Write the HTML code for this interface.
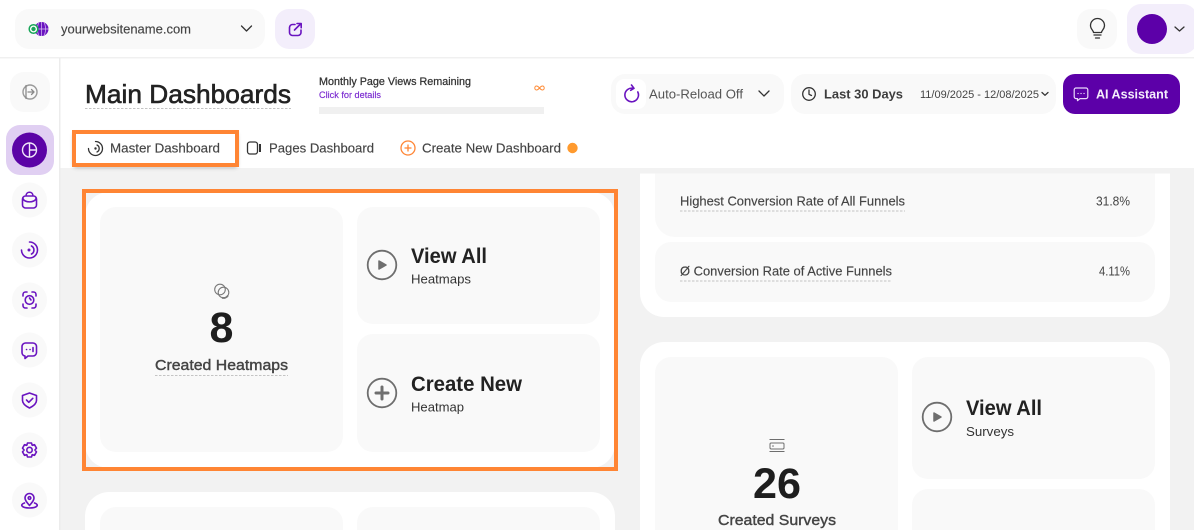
<!DOCTYPE html>
<html><head><meta charset="utf-8"><title>Main Dashboards</title>
<style>
html,body{margin:0;padding:0;width:1194px;height:530px;overflow:hidden;background:#fff}
svg{display:block;font-family:"Liberation Sans",sans-serif}
.m{stroke:currentColor;stroke-width:.4px}
.n{stroke:currentColor;stroke-width:.15px}
.p{fill:none;stroke:#6a14c0;stroke-width:1.6;stroke-linecap:round;stroke-linejoin:round}
.g{fill:none;stroke:#6e6e6e;stroke-width:1.8;stroke-linecap:round;stroke-linejoin:round}
.d{fill:none;stroke:#333;stroke-width:1.3;stroke-linecap:round;stroke-linejoin:round}
.c{fill:#f9f9f9}
.u{stroke:#c4c4c4;stroke-width:1;stroke-dasharray:2.5 1.5}
</style></head><body>
<svg width="1194" height="530" viewBox="0 0 1194 530" xmlns="http://www.w3.org/2000/svg">
<defs><filter id="s" x="-10%" y="-20%" width="120%" height="150%"><feDropShadow dx="0" dy="2" stdDeviation="2" flood-color="#000" flood-opacity=".4"/></filter></defs>
<rect width="1194" height="530" fill="#fff"/>
<!-- content bg -->
<rect x="60" y="168" width="1134" height="362" fill="#f2f2f2"/>
<rect x="0" y="57" width="1194" height="1.5" fill="#f0f0f0"/>
<rect x="59" y="58" width="1.5" height="472" fill="#ececec"/>

<!-- top bar -->
<rect x="15" y="9" width="250" height="40" rx="14" class="c"/>
<circle cx="41.500" cy="29" r="7" fill="#6a14c0"/>
<path d="M34.500 29H48.500M41.500 22V36M38.500 23Q36.500 29 38.500 35M44.500 23Q46.500 29 44.500 35" stroke="#d9c3f2" stroke-width=".7" fill="none"/>
<circle cx="33.500" cy="29" r="4.300" fill="#fff" stroke="#18a558" stroke-width="1.500"/>
<circle cx="33.500" cy="29" r="2.200" fill="#18a558"/>
<text x="61" y="33.500" font-size="13" textLength="130" lengthAdjust="spacingAndGlyphs" style="fill:#444;color:#444" class="n">yourwebsitename.com</text>
<path d="M241.500 26l5 5 5-5" class="d" stroke-width="1.500"/>
<rect x="275" y="9" width="40" height="40" rx="14" fill="#f3eefb"/>
<path d="M295 24.500h-2.500a3 3 0 0 0-3 3v5a3 3 0 0 0 3 3h5.500a3 3 0 0 0 3-3v-2.500M294.500 30l6.500-6.500M297 23.500h4.200v4.200" class="p"/>
<rect x="1077" y="9" width="40" height="40" rx="14" class="c"/>
<path d="M1093.500 32.500c0-2-3-3.200-3-7a7 7 0 0 1 14 0c0 3.800-3 5-3 7zM1094 35h7M1095.500 38h4" class="d" stroke="#444"/>
<rect x="1127" y="4" width="70" height="50" rx="14" fill="#f3eefb"/>
<circle cx="1152" cy="29" r="15" fill="#5c00a8"/>
<path d="M1175 27l4.500 4 4.500-4" class="d"/>

<!-- sidebar -->
<rect x="10" y="72" width="40" height="40" rx="14" class="c"/>
<circle cx="30" cy="92" r="7" fill="none" stroke="#9a9a9a" stroke-width="1.400"/>
<path d="M26 85.500v13M28 92h6M31.500 89.500L34 92l-2.500 2.500" fill="none" stroke="#8a8a8a" stroke-width="1.300" stroke-linecap="round" stroke-linejoin="round"/>
<rect x="6" y="125" width="48" height="50" rx="14" fill="#e0cff2"/>
<circle cx="29.500" cy="150" r="17.500" fill="#5b03a6"/>
<circle cx="29.500" cy="150" r="7" fill="none" stroke="#f0e6fa" stroke-width="1.400"/>
<path d="M29.500 143v14M29.500 150h7" stroke="#f0e6fa" stroke-width="1.400"/>
<g fill="#f9f9f9"><circle cx="29.500" cy="200" r="17.500"/><circle cx="29.500" cy="250" r="17.500"/><circle cx="29.500" cy="300" r="17.500"/><circle cx="29.500" cy="350" r="17.500"/><circle cx="29.500" cy="400" r="17.500"/><circle cx="29.500" cy="450" r="17.500"/><circle cx="29.500" cy="500" r="17.500"/></g>
<path d="M25.500 196h8a3 3 0 0 1 3 3v6a3 3 0 0 1-3 3h-8a3 3 0 0 1-3-3v-6a3 3 0 0 1 3-3zM26 196c0-5 7-5 7 0M23 198.500c1 4.500 12 4.500 13 0" class="p"/>
<path d="M29.500 242a8 8 0 1 1-8 8" class="p" stroke-width="1.700"/>
<path d="M31.500 246a4.500 4.500 0 0 1 0 8" class="p" stroke-width="1.600"/>
<circle cx="29" cy="250" r="1.500" fill="#6a14c0"/>
<path d="M23 296v-1.500a2.500 2.500 0 0 1 2.500-2.500H27M32 292h1.500a2.500 2.500 0 0 1 2.500 2.500V296M36 304v1.500a2.500 2.500 0 0 1-2.500 2.500H32M27 308h-1.500a2.500 2.500 0 0 1-2.500-2.500V304" class="p"/>
<circle cx="29.500" cy="300" r="4.300" class="p"/><path d="M29.500 298l1.500 2" class="p"/>
<path d="M26 343h7a3.500 3.500 0 0 1 3.500 3.500v6a3.500 3.500 0 0 1-3.500 3.500h-5l-3 2.500v-2.500a3.500 3.500 0 0 1-3-3.500v-6a3.500 3.500 0 0 1 3.500-3.500z" class="p"/>
<path d="M26.500 349.500h.1M30 349.500h.1M33 347.500v4" class="p"/>
<path d="M29.500 393l7 2.500v5c0 3-3 5.500-7 7.500c-4-2-7-4.500-7-7.500v-5z" class="p"/><path d="M26.500 400l2.300 2.300l4-4" class="p"/>
<path d="M27.500 443h4l.7 2.300l2.300-.6l2 3.400l-1.600 1.900l1.600 1.900l-2 3.400l-2.300-.6l-.7 2.300h-4l-.7-2.300l-2.300.6l-2-3.400l1.600-1.900l-1.600-1.900l2-3.400l2.300.6z" class="p"/>
<circle cx="29.500" cy="450" r="2.700" class="p"/>
<path d="M29.500 505.500c-2.500-3-4.500-5-4.500-7.500a4.500 4.500 0 0 1 9 0c0 2.500-2 4.500-4.500 7.500z" class="p"/>
<circle cx="29.500" cy="498" r="1.300" class="p"/>
<path d="M24.500 503c-5 1.500-3 5 5 5s10-3.500 5-5" class="p"/>

<!-- header -->
<text x="85" y="103" font-size="26" textLength="206" lengthAdjust="spacingAndGlyphs" style="fill:#222;color:#222;stroke-width:.6px" class="m">Main Dashboards</text>
<line x1="85" y1="108.500" x2="291" y2="108.500" class="u"/>
<text x="319" y="85" font-size="11" textLength="152" lengthAdjust="spacingAndGlyphs" style="fill:#333;color:#333;stroke-width:.25px" class="m">Monthly Page Views Remaining</text>
<text x="319" y="98" font-size="9" textLength="62" lengthAdjust="spacingAndGlyphs" style="fill:#7a2ad0;color:#7a2ad0" class="n">Click for details</text>
<rect x="319" y="107" width="225" height="7" fill="#f0f0f0"/>
<path d="M539.500 88c-1.400-1.700-2.300-2-3.100-2s-1.600.8-1.600 2 .8 2 1.600 2 1.700-.3 3.100-2 2.300-2 3.100-2 1.600.8 1.600 2-.8 2-1.600 2-1.700-.3-3.100-2z" fill="none" stroke="#ff8a34" stroke-width="1"/>
<rect x="611" y="74" width="173" height="40" rx="14" class="c"/>
<rect x="616" y="79" width="30" height="30" rx="8" fill="#fff"/>
<path d="M637.800 92a6.800 6.800 0 1 1-4.300-3.600M631.500 85l2.500 3.300l-3.300 2" class="p"/>
<text x="649" y="98.500" font-size="13" textLength="94" lengthAdjust="spacingAndGlyphs" style="fill:#555">Auto-Reload Off</text>
<path d="M759 91l5 5 5-5" class="d" stroke-width="1.500"/>
<rect x="791" y="74" width="265" height="40" rx="14" class="c"/>
<circle cx="809" cy="94" r="6.300" class="d"/><path d="M809 90v4.300l2.500 1.200" class="d"/>
<text x="824" y="98.500" font-size="13" font-weight="700" textLength="79" lengthAdjust="spacingAndGlyphs" style="fill:#3d3d3d">Last 30 Days</text>
<text x="920" y="98" font-size="11" textLength="119" lengthAdjust="spacingAndGlyphs" style="fill:#444">11/09/2025 - 12/08/2025</text>
<path d="M1042 92.500l3 2.800 3-2.800" class="d" stroke-width="1"/>
<rect x="1063" y="74" width="117" height="40" rx="12" fill="#5c00a8"/>
<path d="M1076 88h10a1.800 1.800 0 0 1 1.800 1.800v7a1.800 1.800 0 0 1-1.800 1.800h-6l-2.500 2v-2h-1.500a1.800 1.800 0 0 1-1.800-1.800v-7a1.800 1.800 0 0 1 1.800-1.800z" fill="none" stroke="#e9d9fa" stroke-width="1.200" stroke-linejoin="round"/>
<path d="M1078 93.500h.1M1081 93.500h.1M1084 93.500h.1" stroke="#e9d9fa" stroke-width="1.300" stroke-linecap="round"/>
<text x="1096" y="98.500" font-size="13" font-weight="700" textLength="72" lengthAdjust="spacingAndGlyphs" style="fill:#f5eefc">AI Assistant</text>

<!-- tabs -->
<rect x="74" y="132" width="163" height="33" fill="#fff" filter="url(#s)"/>
<rect x="74" y="132" width="163" height="33" fill="#fff" stroke="#ff8534" stroke-width="4"/>
<path d="M95.500 141.500a7 7 0 1 1-7 7" fill="none" stroke="#333" stroke-width="1.300" stroke-linecap="round"/>
<path d="M97 145a3.900 3.900 0 0 1 0 7" fill="none" stroke="#333" stroke-width="1.300" stroke-linecap="round"/>
<circle cx="95.500" cy="148.500" r="1.200" fill="#333"/>
<text x="110" y="152.500" font-size="13" textLength="110" lengthAdjust="spacingAndGlyphs" style="fill:#444;color:#444" class="n">Master Dashboard</text>
<rect x="247.500" y="142" width="10" height="12" rx="2.500" class="d"/><path d="M260 144v8" stroke="#333" stroke-width="2"/>
<text x="269" y="152.500" font-size="13" textLength="105" lengthAdjust="spacingAndGlyphs" style="fill:#444;color:#444" class="n">Pages Dashboard</text>
<circle cx="408" cy="148" r="7" fill="none" stroke="#ff8534" stroke-width="1.300"/>
<path d="M404.500 148h7M408 144.500v7" stroke="#ff8534" stroke-width="1.300"/>
<text x="422" y="152.500" font-size="13" textLength="139" lengthAdjust="spacingAndGlyphs" style="fill:#444;color:#444" class="n">Create New Dashboard</text>
<circle cx="572.500" cy="148" r="5.200" fill="#ff9a2e"/>

<!-- heatmap card -->
<rect x="85" y="192" width="530" height="276" rx="24" fill="#fff"/>
<rect x="84" y="191" width="532" height="278" fill="none" stroke="#ff8534" stroke-width="4"/>
<rect x="100" y="207" width="243" height="245" rx="16" class="c"/>
<rect x="357" y="207" width="243" height="117" rx="16" class="c"/>
<rect x="357" y="334" width="243" height="118" rx="16" class="c"/>
<circle cx="220" cy="289.500" r="5.300" fill="none" stroke="#7a7a7a" stroke-width="1.100"/>
<circle cx="223.500" cy="292.500" r="5.300" fill="none" stroke="#7a7a7a" stroke-width="1.100"/>
<path d="M228 295.500a5.300 5.300 0 0 1-6 2.300" fill="none" stroke="#7a7a7a" stroke-width="1.800"/>
<text x="221.500" y="342" font-size="43" font-weight="700" text-anchor="middle" style="fill:#1e1e1e">8</text>
<text x="155" y="370" font-size="15" textLength="133" lengthAdjust="spacingAndGlyphs" style="fill:#444;color:#444" class="m">Created Heatmaps</text>
<line x1="155" y1="375.500" x2="288" y2="375.500" class="u"/>
<circle cx="382" cy="265" r="14.300" class="g"/><path d="M379 261v8l7-4z" fill="#6e6e6e" stroke="#6e6e6e" stroke-width="1.500" stroke-linejoin="round"/>
<text x="411" y="263" font-size="21" font-weight="700" textLength="76" lengthAdjust="spacingAndGlyphs" style="fill:#222">View All</text>
<text x="411" y="283.500" font-size="13" textLength="60" lengthAdjust="spacingAndGlyphs" style="fill:#333">Heatmaps</text>
<circle cx="382" cy="393" r="14.300" class="g"/><path d="M376 393h12M382 387v12" stroke="#6e6e6e" stroke-width="3" stroke-linecap="round"/>
<text x="411" y="391" font-size="21" font-weight="700" textLength="111" lengthAdjust="spacingAndGlyphs" style="fill:#222">Create New</text>
<text x="411" y="411.500" font-size="13" textLength="53" lengthAdjust="spacingAndGlyphs" style="fill:#333">Heatmap</text>

<!-- lower left card -->
<path d="M85 530V516a24 24 0 0 1 24-24H591a24 24 0 0 1 24 24V530z" fill="#fff"/>
<path d="M100 530V523a16 16 0 0 1 16-16H327a16 16 0 0 1 16 16V530z" class="c"/>
<path d="M357 530V523a16 16 0 0 1 16-16H584a16 16 0 0 1 16 16V530z" class="c"/>

<!-- right top card -->
<path d="M640 173.500H1170V293a24 24 0 0 1-24 24H664a24 24 0 0 1-24-24z" fill="#fff"/>
<path d="M655 173.500H1155V217a20 20 0 0 1-20 20H675a20 20 0 0 1-20-20z" class="c"/>
<rect x="655" y="242" width="500" height="60" rx="16" class="c"/>
<text x="680" y="205.500" font-size="13" textLength="225" lengthAdjust="spacingAndGlyphs" style="fill:#444;color:#444" class="n">Highest Conversion Rate of All Funnels</text>
<line x1="680" y1="211" x2="905" y2="211" class="u"/>
<text x="1096" y="205.500" font-size="13" textLength="34" lengthAdjust="spacingAndGlyphs" style="fill:#444">31.8%</text>
<text x="680" y="275.500" font-size="13" textLength="212" lengthAdjust="spacingAndGlyphs" style="fill:#444;color:#444" class="n">Ø Conversion Rate of Active Funnels</text>
<line x1="680" y1="281" x2="892" y2="281" class="u"/>
<text x="1099" y="275.500" font-size="13" textLength="31" lengthAdjust="spacingAndGlyphs" style="fill:#444">4.11%</text>

<!-- surveys card -->
<path d="M640 530V366a24 24 0 0 1 24-24H1146a24 24 0 0 1 24 24V530z" fill="#fff"/>
<path d="M655 530V373a16 16 0 0 1 16-16H882a16 16 0 0 1 16 16V530z" class="c"/>
<rect x="912" y="357" width="243" height="122" rx="16" class="c"/>
<path d="M912 530V505a16 16 0 0 1 16-16H1139a16 16 0 0 1 16 16V530z" class="c"/>
<path d="M769.500 439.500h15M769.500 451.500h15" stroke="#6e6e6e" stroke-width="1"/>
<rect x="770" y="443" width="14" height="6" rx="1.200" fill="none" stroke="#6e6e6e" stroke-width="1"/>
<circle cx="773" cy="446" r=".8" fill="#6e6e6e"/>
<text x="753" y="498" font-size="43" font-weight="700" textLength="48" lengthAdjust="spacingAndGlyphs" style="fill:#1e1e1e">26</text>
<text x="718" y="525" font-size="15" textLength="118" lengthAdjust="spacingAndGlyphs" style="fill:#444;color:#444" class="m">Created Surveys</text>
<circle cx="937" cy="417" r="14.300" class="g"/><path d="M934 413v8l7-4z" fill="#6e6e6e" stroke="#6e6e6e" stroke-width="1.500" stroke-linejoin="round"/>
<text x="966" y="415" font-size="21" font-weight="700" textLength="76" lengthAdjust="spacingAndGlyphs" style="fill:#222">View All</text>
<text x="966" y="436" font-size="13" textLength="48" lengthAdjust="spacingAndGlyphs" style="fill:#333">Surveys</text>
</svg>
</body></html>
